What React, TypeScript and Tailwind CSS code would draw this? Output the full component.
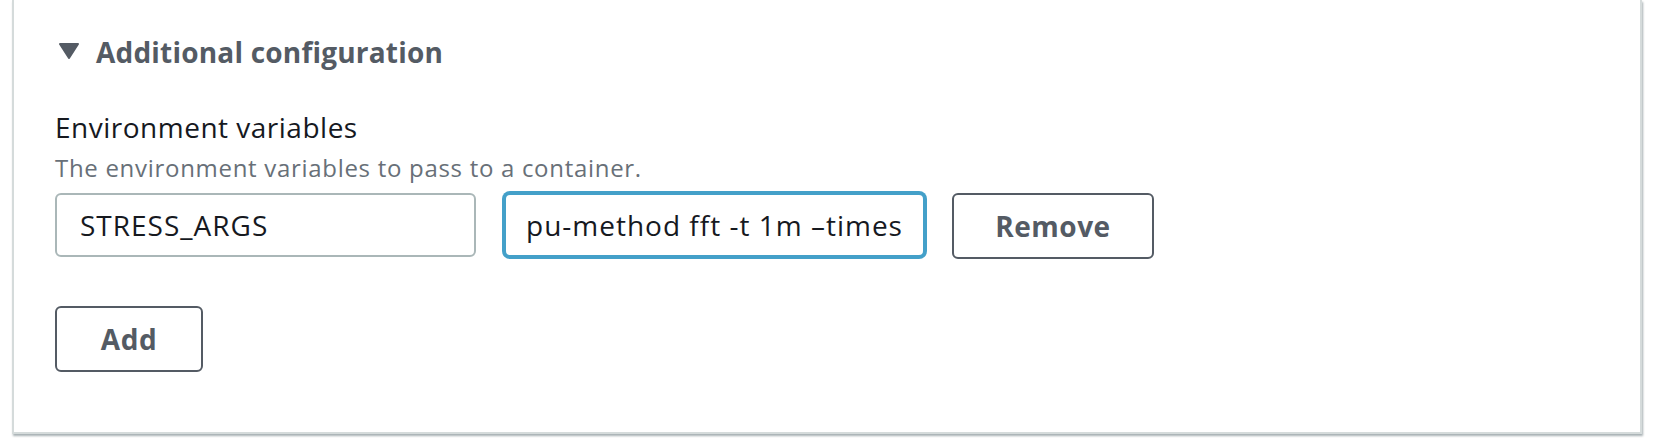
import React from 'react';

const font = { fontFamily: '"Open Sans", "Noto Sans", sans-serif' };

export default function App() {
  return (
    <div className="w-[1654px] h-[442px] bg-white" style={font}>
      <div className="ml-[12px] w-[1630px] h-[434px] bg-white border-x-2 border-b-2 border-[#d5dbdb] shadow-[1px_2px_2px_rgba(0,28,36,0.35)] pl-[41px] pt-[38px]">
        <div className="flex items-start">
          <svg width="20" height="16" viewBox="0 0 20 16" className="ml-[4px] mt-[5px] mr-[17px]">
            <path d="M1 1 H19 L10 15 Z" fill="#545b64" stroke="#545b64" strokeWidth="2" strokeLinejoin="round" />
          </svg>
          <span className="text-[28px] font-bold text-[#545b64] leading-none tracking-[0.2px]">Additional configuration</span>
        </div>

        <div className="mt-[47px] text-[28px] leading-none text-[#16191f] tracking-[0.5px]">Environment variables</div>
        <div className="mt-[15px] text-[24px] leading-none text-[#687078] tracking-[0.7px]">The environment variables to pass to a container.</div>

        <div className="mt-[13px] flex items-start">
          <input
            readOnly
            defaultValue="STRESS_ARGS"
            className="w-[421px] h-[64px] rounded-[6px] border-2 border-[#aab7b8] px-[23px] text-[28px] tracking-[1px] text-[#16191f] outline-none bg-white"
          />
          <input
            readOnly
            defaultValue="pu-method fft -t 1m –times"
            className="ml-[28px] w-[421px] h-[64px] rounded-[6px] border-2 border-[#44a0c9] ring-2 ring-[#44a0c9] px-[20px] text-[28px] tracking-[1px] text-[#16191f] outline-none bg-white"
          />
          <button className="ml-[27px] w-[202px] h-[66px] rounded-[6px] border-2 border-[#545b64] text-[28px] tracking-[0.5px] font-bold text-[#545b64] bg-white">
            Remove
          </button>
        </div>

        <button className="mt-[47px] w-[148px] h-[66px] rounded-[6px] border-2 border-[#545b64] text-[28px] tracking-[0.5px] font-bold text-[#545b64] bg-white">
          Add
        </button>
      </div>
    </div>
  );
}
